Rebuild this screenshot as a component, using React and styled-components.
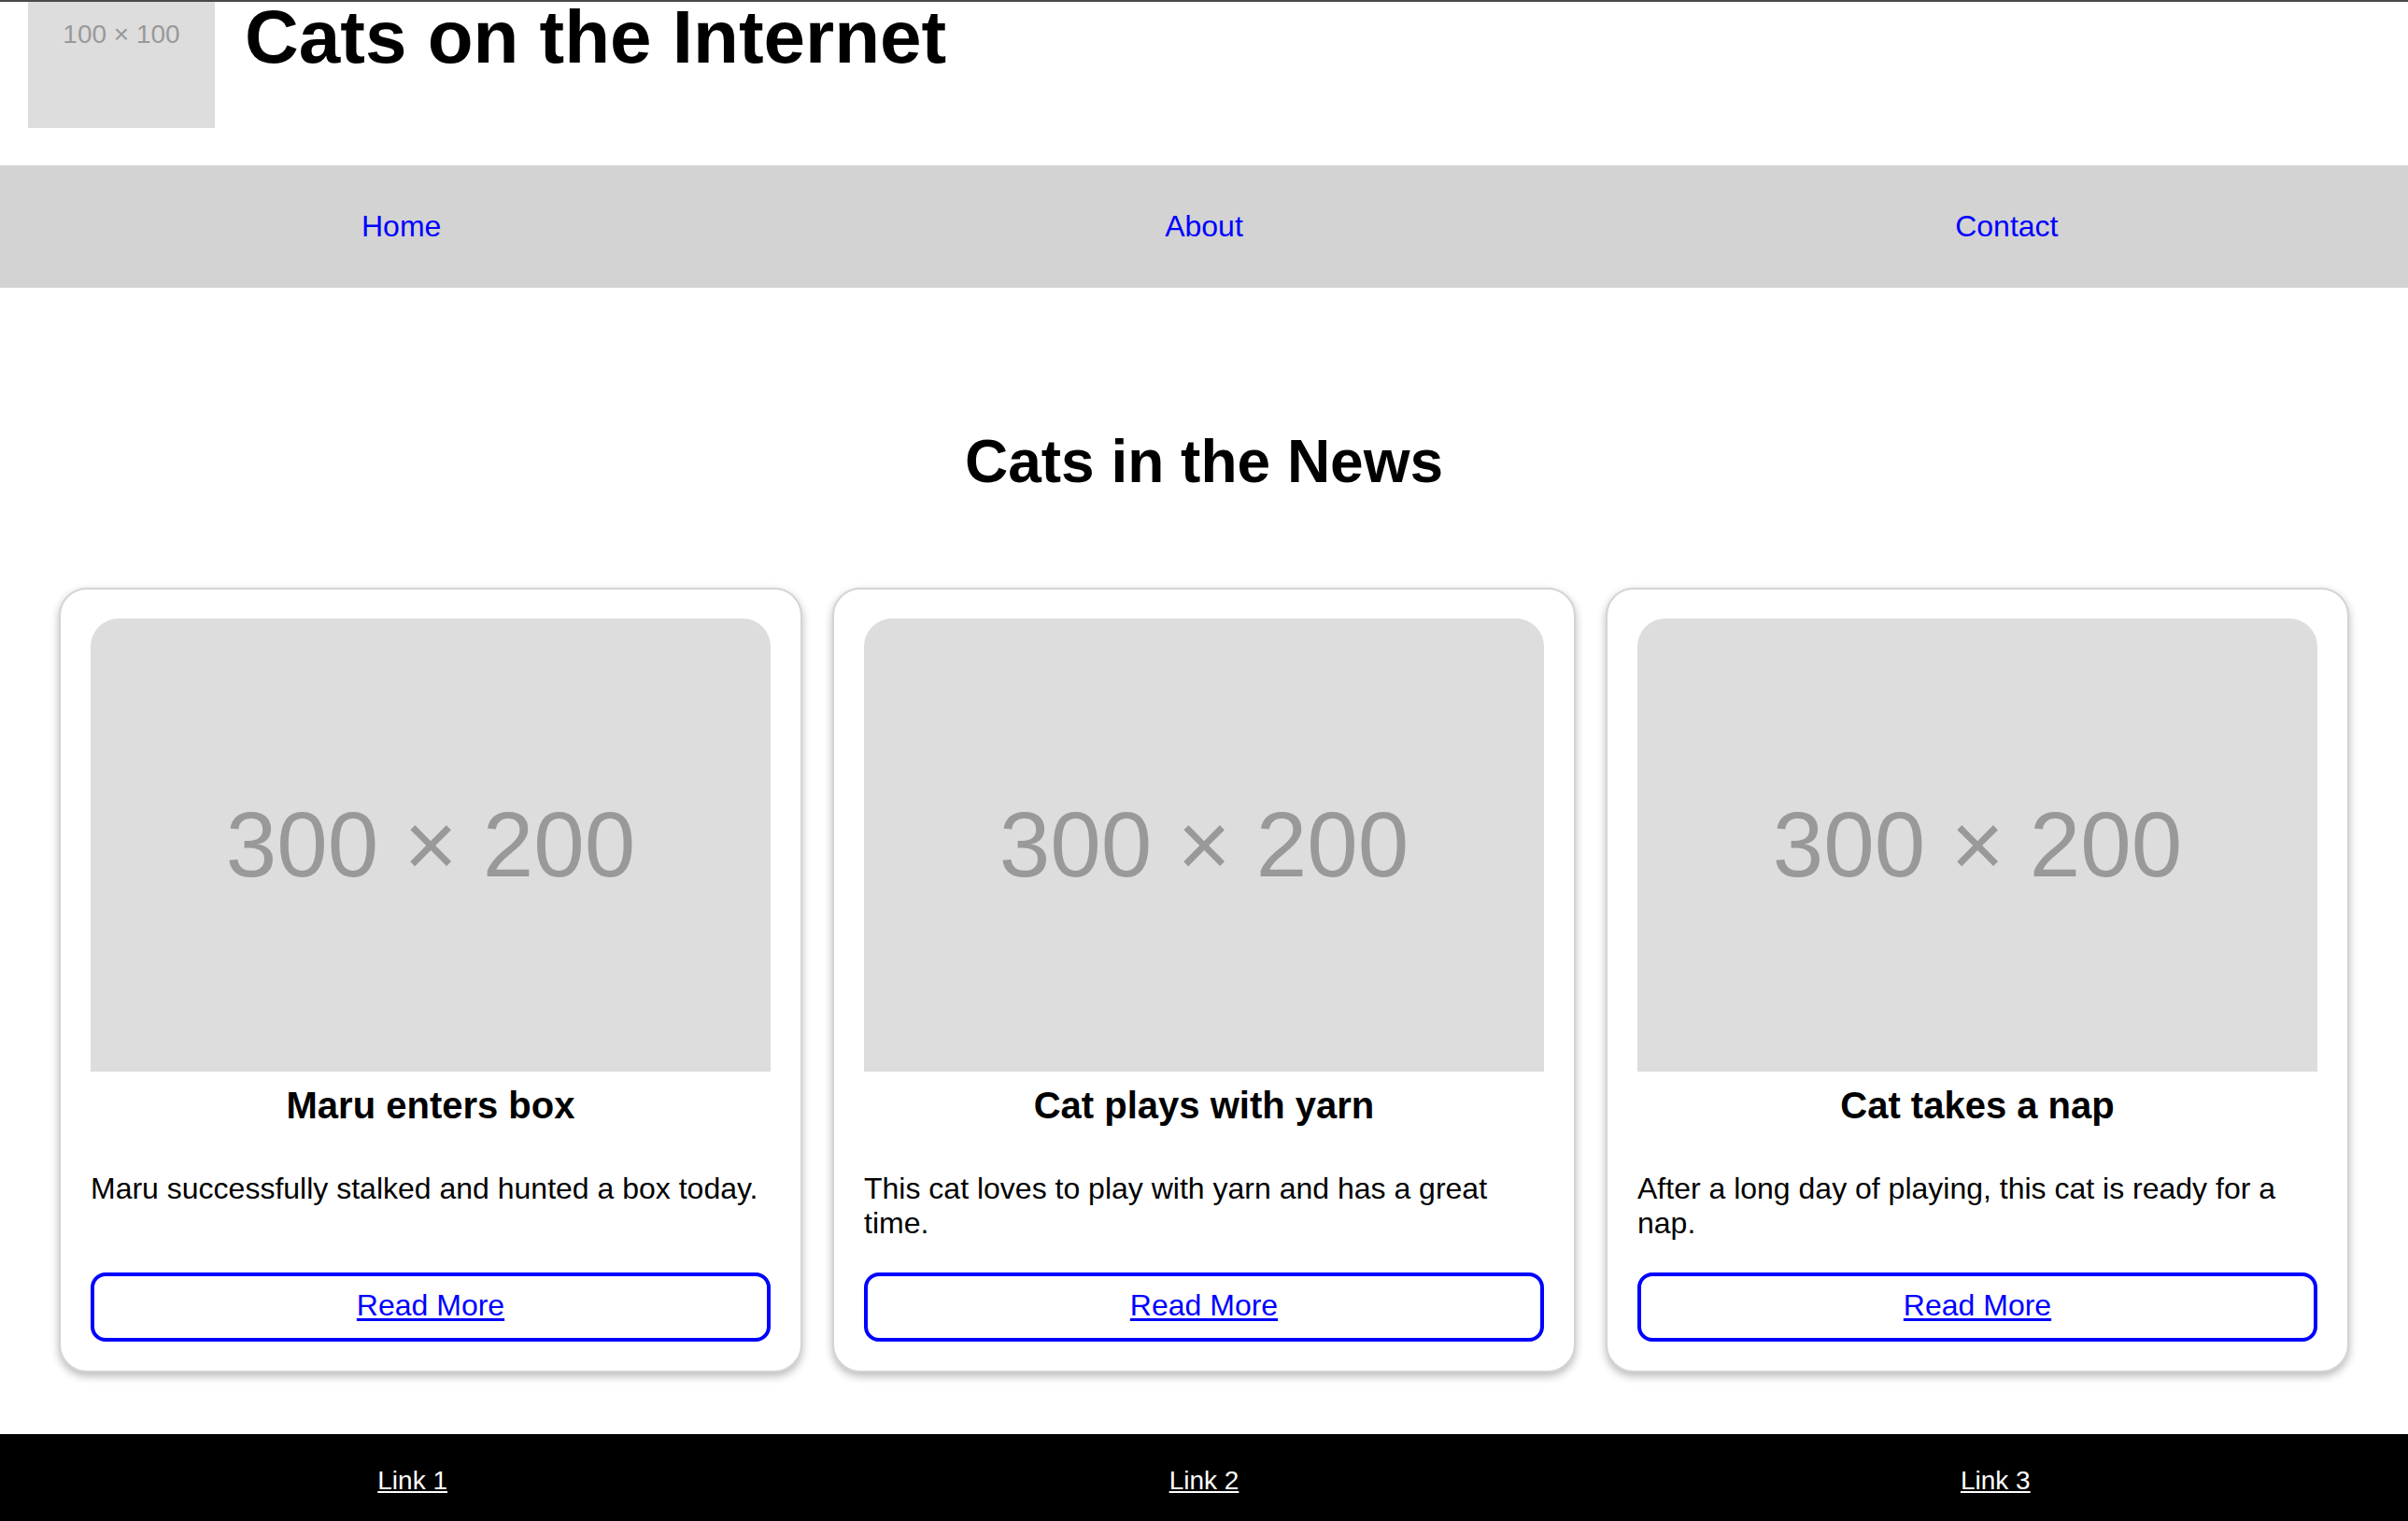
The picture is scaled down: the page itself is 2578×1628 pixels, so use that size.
import React from "react";
import styled, { createGlobalStyle } from "styled-components";

const GlobalStyle = createGlobalStyle`
  html, body {
    margin: 0;
    padding: 0;
    background: #ffffff;
    overflow: hidden;
    font-family: "Liberation Sans", Arial, Helvetica, sans-serif;
    color: #000;
  }
  * { box-sizing: border-box; }
`;

const TopEdge = styled.div`
  position: fixed;
  top: 0;
  left: 0;
  right: 0;
  height: 2px;
  background: #4a4a4a;
  z-index: 10;
`;

const Page = styled.div`
  margin-top: -63px;
`;

const Header = styled.header`
  display: flex;
  align-items: center;
  gap: 32px;
  padding: 0 30px;
`;

const Placeholder = styled.div`
  display: flex;
  align-items: center;
  justify-content: center;
  background: #dddddd;
  color: #999999;
  font-family: "Liberation Sans", Arial, sans-serif;
  font-size: ${(p) => p.$size}px;
  white-space: nowrap;
`;

const Logo = styled(Placeholder)`
  width: 200px;
  height: 200px;
  flex: none;
`;

const SiteTitle = styled.h1`
  margin: 6px 0 0;
  font-size: 80px;
  line-height: 1.15;
  font-weight: 700;
`;

const Nav = styled.nav`
  margin-top: 40px;
  height: 131px;
  background: #d3d3d3;
  display: flex;
  align-items: center;
`;

const NavItem = styled.div`
  flex: 1;
  text-align: center;
`;

const NavLink = styled.a`
  color: #0000ff;
  text-decoration: none;
  font-size: 32px;
  line-height: 1.15;
`;

const Main = styled.main`
  padding: 0 63px 66px;
`;

const SectionTitle = styled.h2`
  margin: 149px 0 98px;
  text-align: center;
  font-size: 64px;
  line-height: 74px;
  font-weight: 700;
`;

const CardGrid = styled.div`
  display: grid;
  grid-template-columns: repeat(3, 1fr);
  gap: 32px;
`;

const Card = styled.article`
  display: flex;
  flex-direction: column;
  background: #fff;
  border: 2px solid #d4d4d4;
  border-radius: 30px;
  padding: 31px 32px;
  box-shadow: 0 4px 10px rgba(0, 0, 0, 0.28);
`;

const CardImage = styled(Placeholder)`
  width: 100%;
  aspect-ratio: 3 / 2;
  border-radius: 30px 30px 0 0;
`;

const CardTitle = styled.h3`
  margin: 13px 0 0;
  text-align: center;
  font-size: 40px;
  line-height: 46px;
  font-weight: 700;
`;

const CardText = styled.p`
  margin: 48px 0 34px;
  font-size: 32px;
  line-height: 1.15;
`;

const ReadMore = styled.a`
  margin-top: auto;
  display: block;
  border: 4px solid #0000ff;
  border-radius: 16px;
  padding: 13px 0 16px;
  text-align: center;
  color: #0000ff;
  text-decoration: underline;
  text-underline-offset: 3px;
  font-size: 32px;
  line-height: 37px;
`;

const Footer = styled.footer`
  background: #000;
  padding: 34px 18px;
  display: flex;
`;

const FooterItem = styled.div`
  flex: 1;
  text-align: center;
`;

const FooterLink = styled.a`
  color: #fff;
  text-decoration: underline;
  font-size: 28px;
  line-height: 1.15;
`;

const cards = [
  {
    title: "Maru enters box",
    text: "Maru successfully stalked and hunted a box today.",
  },
  {
    title: "Cat plays with yarn",
    text: "This cat loves to play with yarn and has a great time.",
  },
  {
    title: "Cat takes a nap",
    text: "After a long day of playing, this cat is ready for a nap.",
  },
];

export default function App() {
  return (
    <>
      <GlobalStyle />
      <TopEdge />
      <Page>
        <Header>
          <Logo $size={28}>100 × 100</Logo>
          <SiteTitle>Cats on the Internet</SiteTitle>
        </Header>
        <Nav>
          {["Home", "About", "Contact"].map((l) => (
            <NavItem key={l}>
              <NavLink href="#">{l}</NavLink>
            </NavItem>
          ))}
        </Nav>
        <Main>
          <SectionTitle>Cats in the News</SectionTitle>
          <CardGrid>
            {cards.map((c) => (
              <Card key={c.title}>
                <CardImage $size={98}>300 × 200</CardImage>
                <CardTitle>{c.title}</CardTitle>
                <CardText>{c.text}</CardText>
                <ReadMore href="#">Read More</ReadMore>
              </Card>
            ))}
          </CardGrid>
        </Main>
        <Footer>
          {["Link 1", "Link 2", "Link 3"].map((l) => (
            <FooterItem key={l}>
              <FooterLink href="#">{l}</FooterLink>
            </FooterItem>
          ))}
        </Footer>
      </Page>
    </>
  );
}
